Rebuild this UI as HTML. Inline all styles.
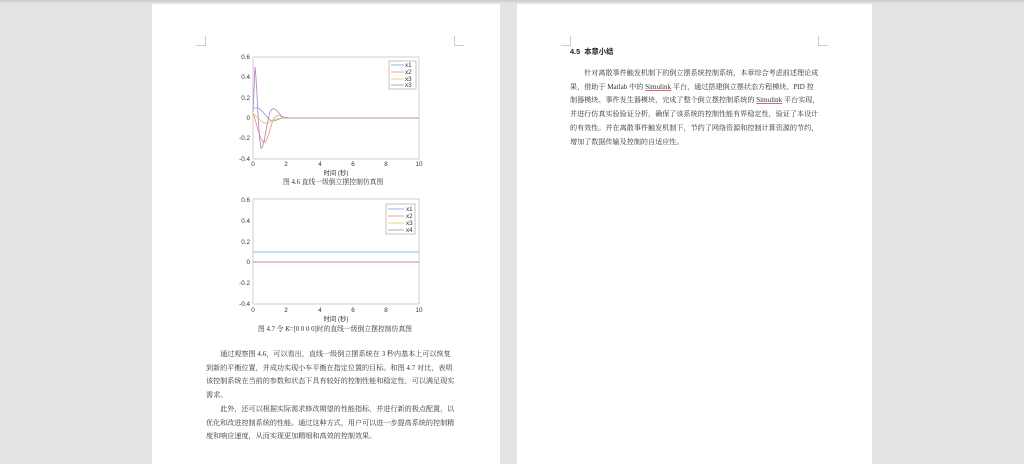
<!DOCTYPE html>
<html><head><meta charset="utf-8"><style>
body{margin:0;width:1024px;height:454px;background:#e3e3e3;position:relative;overflow:hidden;font-family:"Liberation Serif","Noto Serif CJK SC",serif;color:#333}
.top{position:absolute;left:0;top:0;width:1024px;height:2px;background:#d0d0d0}
.page{position:absolute;background:#fff;top:4px;height:460px}
.p{position:absolute;font-size:7.1px;line-height:13.7px;text-align:justify;color:#333}
.p div{white-space:nowrap}
.mk{position:absolute;border-color:#ccc;border-style:solid;width:9px;height:9px}
svg text{font-family:"Liberation Sans",sans-serif;font-size:6.3px;fill:#333}
</style></head><body>
<div class="top"></div>
<div class="page" style="left:152px;width:348px"></div>
<div class="page" style="left:517px;width:355px"></div>
<div class="mk" style="left:196px;top:36px;border-width:0 1px 1px 0"></div>
<div class="mk" style="left:454px;top:36px;border-width:0 0 1px 1px"></div>
<div class="mk" style="left:561px;top:36px;border-width:0 1px 1px 0"></div>
<div class="mk" style="left:818px;top:36px;border-width:0 0 1px 1px"></div>
<svg style="position:absolute;left:0;top:0" width="1024" height="454">
<g stroke="#bbb" stroke-width="0.7" fill="none">
<rect x="253" y="57" width="166" height="102"/>
<rect x="253" y="199" width="166" height="105"/>
</g>
<g text-anchor="end">
<text x="250" y="59">0.6</text><text x="250" y="79">0.4</text><text x="250" y="100">0.2</text><text x="250" y="120">0</text><text x="250" y="140">-0.2</text><text x="250" y="161">-0.4</text>
<text x="250" y="202">0.6</text><text x="250" y="223">0.4</text><text x="250" y="244">0.2</text><text x="250" y="264">0</text><text x="250" y="285">-0.2</text><text x="250" y="306">-0.4</text>
</g>
<g text-anchor="middle">
<text x="253" y="166">0</text><text x="286" y="166">2</text><text x="320" y="166">4</text><text x="353" y="166">6</text><text x="386" y="166">8</text><text x="419" y="166">10</text>
<text x="336" y="175">时间 (秒)</text>
<text x="253" y="312">0</text><text x="286" y="312">2</text><text x="320" y="312">4</text><text x="353" y="312">6</text><text x="386" y="312">8</text><text x="419" y="312">10</text>
<text x="336" y="321">时间 (秒)</text>
</g>
<g fill="none" stroke-width="0.8">
<path d="M253 108 L258 108 C262 110,266 116,270 120 C274 122,278 119,283 118 L419 118" stroke="#6fa8dc"/>
<path d="M253 113 C256 120,258 135,263 142 C267 145,270 128,273 120 C276 114,280 115,285 118 L419 118" stroke="#e8927a"/>
<path d="M253 113 C258 118,262 124,267 123 C271 122,275 118,282 118 L419 118" stroke="#f3c56a"/>
<path d="M253 112 L255 67 C257 80,258 135,261 148 C264 150,266 125,270 112 C273 106,276 109,282 117 L290 118 L419 118" stroke="#b07fc0"/>
<path d="M253 252 L419 252" stroke="#6fa8dc"/>
<path d="M253 262 L419 262" stroke="#c0656a"/>
</g>
<g>
<rect x="389" y="61" width="27" height="28" fill="#fff" stroke="#888" stroke-width="0.5"/>
<line x1="391" y1="65" x2="404" y2="65" stroke="#6fa8dc" stroke-width="0.8"/><text x="405" y="67">x1</text>
<line x1="391" y1="72" x2="404" y2="72" stroke="#e8927a" stroke-width="0.8"/><text x="405" y="74">x2</text>
<line x1="391" y1="79" x2="404" y2="79" stroke="#f3c56a" stroke-width="0.8"/><text x="405" y="81">x3</text>
<line x1="391" y1="85" x2="404" y2="85" stroke="#b07fc0" stroke-width="0.8"/><text x="405" y="87">x3</text>
<rect x="386" y="204" width="29" height="30" fill="#fff" stroke="#888" stroke-width="0.5"/>
<line x1="388" y1="209" x2="404" y2="209" stroke="#6fa8dc" stroke-width="0.8"/><text x="406" y="211">x1</text>
<line x1="388" y1="216" x2="404" y2="216" stroke="#e8927a" stroke-width="0.8"/><text x="406" y="218">x2</text>
<line x1="388" y1="223" x2="404" y2="223" stroke="#f3c56a" stroke-width="0.8"/><text x="406" y="225">x3</text>
<line x1="388" y1="230" x2="404" y2="230" stroke="#b07fc0" stroke-width="0.8"/><text x="406" y="232">x4</text>
</g>
</svg>
<div class="p" style="left:283px;top:176px;font-size:6.8px">图 4.6 直线一级倒立摆控制仿真图</div>
<div class="p" style="left:258px;top:323px;font-size:6.8px">图 4.7 令 <i>K</i>=[0 0 0 0]时的直线一级倒立摆控制仿真图</div>
<div class="p" style="left:206px;top:348px;width:248px">
<div>&emsp;&emsp;通过观察图 4.6，可以看出，直线一级倒立摆系统在 3 秒内基本上可以恢复</div>
<div>到新的平衡位置，并成功实现小车平衡在指定位置的目标。和图 4.7 对比，表明</div>
<div>该控制系统在当前的参数和状态下具有较好的控制性能和稳定性，可以满足现实</div>
<div>需求。</div>
<div>&emsp;&emsp;此外，还可以根据实际需求修改期望的性能指标，并进行新的极点配置，以</div>
<div>优化和改进控制系统的性能。通过这种方式，用户可以进一步提高系统的控制精</div>
<div>度和响应速度，从而实现更加精细和高效的控制效果。</div>
</div>
<div class="p" style="left:570px;top:45px;font-family:'Liberation Sans','Noto Sans CJK SC',sans-serif;font-weight:bold;font-size:7.3px;color:#222">4.5&nbsp; 本章小结</div>
<div class="p" style="left:570px;top:67px;width:250px">
<div>&emsp;&emsp;针对离散事件触发机制下的倒立摆系统控制系统，本章综合考虑前述理论成</div>
<div>果，借助于 Matlab 中的 <u style="text-decoration-color:#d66">Simulink</u> 平台，通过搭建倒立摆状态方程模块、PID 控</div>
<div>制器模块、事件发生器模块，完成了整个倒立摆控制系统的 <u style="text-decoration-color:#d66">Simulink</u> 平台实现，</div>
<div>并进行仿真实验验证分析，确保了该系统的控制性能有界稳定性，验证了本设计</div>
<div>的有效性。并在离散事件触发机制下，节约了网络资源和控制计算资源的节约，</div>
<div>增加了数据传输及控制的自适应性。</div>
</div>
</body></html>
